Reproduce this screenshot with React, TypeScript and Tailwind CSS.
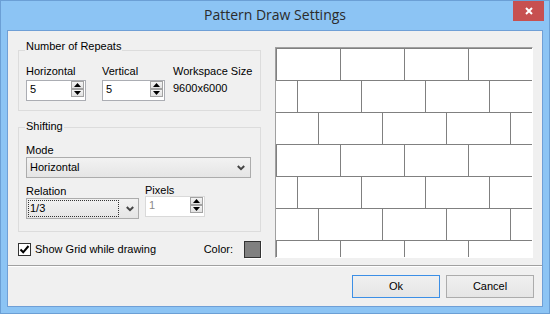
import React from "react";

function Arrow({ up }: { up?: boolean }) {
  return (
    <div className="w-[13px] h-[8px] border border-[#a3a3a3] bg-gradient-to-b from-[#f4f4f4] to-[#e2e2e2] flex items-center justify-center">
      <svg width="7" height="4" viewBox="0 0 7 4" className="block">
        {up ? <polygon points="0,4 7,4 3.5,0" fill="#000" /> : <polygon points="0,0 7,0 3.5,4" fill="#000" />}
      </svg>
    </div>
  );
}

function Spin({ value, className, disabled = false }: { value: string; className: string; disabled?: boolean }) {
  return (
    <div
      className={`flex h-[21px] bg-white border ${className} ${
        disabled ? "border-[#d9d9d9] text-[#8a8a8a]" : "border-[#abadb3] text-black"
      }`}
    >
      <span className="flex-1 pl-[3px] pt-[2px] leading-[13px]">{value}</span>
      <div className="flex flex-col mr-[1px]">
        <Arrow up />
        <Arrow />
      </div>
    </div>
  );
}

function Chevron() {
  return (
    <svg width="8" height="6" viewBox="0 0 8 6" className="block">
      <polyline points="0.8,1 4,4.2 7.2,1" fill="none" stroke="#444" strokeWidth="2" />
    </svg>
  );
}

function Bricks() {
  const lines: React.ReactNode[] = [];
  for (let i = 0; i < 7; i++) {
    const y = i * 32;
    lines.push(<line key={`h${i}`} x1={0} x2={256} y1={y + 0.5} y2={y + 0.5} />);
    const o = Math.floor(((i % 3) * 64) / 3);
    for (let x = o; x < 256; x += 64) {
      lines.push(<line key={`v${i}-${x}`} x1={x + 0.5} x2={x + 0.5} y1={y} y2={Math.min(y + 32, 209)} />);
    }
  }
  return (
    <svg width="256" height="209" className="block bg-white" stroke="#808080" strokeWidth={1} shapeRendering="crispEdges">
      {lines}
    </svg>
  );
}

export default function App() {
  return (
    <div className="w-[550px] h-[314px] bg-[#8cc4f4] border border-[#6b9fd5] flex flex-col font-['Liberation_Sans',Arial,sans-serif] text-[11px] text-black">
      {/* title bar */}
      <div className="h-[29px] relative flex items-center justify-center">
        <span className="font-['Open_Sans',sans-serif] text-[14px] text-[#2b2b2b] leading-none pb-[1px]">
          Pattern Draw Settings
        </span>
        <div className="absolute top-0 right-[5px] w-[31px] h-[20px] bg-[#c75050] flex items-center justify-center">
          <svg width="8" height="8" viewBox="0 0 8 8" className="block">
            <path d="M1 1 L7 7 M7 1 L1 7" stroke="#fff" strokeWidth="2" />
          </svg>
        </div>
      </div>

      {/* client area */}
      <div className="flex-1 mx-[6px] mb-[6px] border border-[#6f9fd6] bg-[#f0f0f0] flex flex-col">
        <div className="h-[234px] flex pl-[10px] pr-[9px]">
          <div className="w-[243px] flex flex-col pt-[19px]">
            {/* Number of Repeats */}
            <div className="relative h-[61px] border border-[#dcdcdc] pl-[7px] pt-[14px]">
              <span className="absolute -top-[11px] left-[6px] px-[1px] bg-[#f0f0f0] leading-[13px]">
                Number of Repeats
              </span>
              <div className="flex">
                <div className="w-[76px] flex flex-col">
                  <span className="leading-[13px]">Horizontal</span>
                  <Spin value="5" className="w-[60px] mt-[2px]" />
                </div>
                <div className="w-[71px] flex flex-col">
                  <span className="leading-[13px]">Vertical</span>
                  <Spin value="5" className="w-[63px] mt-[2px]" />
                </div>
                <div className="flex flex-col">
                  <span className="leading-[13px]">Workspace Size</span>
                  <span className="mt-[2px] h-[21px] leading-[13px] pt-[2px]">9600x6000</span>
                </div>
              </div>
            </div>

            {/* Shifting */}
            <div className="relative mt-[16px] h-[105px] border border-[#dcdcdc] pl-[7px] pt-[16px]">
              <span className="absolute -top-[8px] left-[6px] px-[1px] bg-[#f0f0f0] leading-[13px]">Shifting</span>
              <div className="leading-[13px]">Mode</div>
              <div className="w-[225px] h-[21px] border border-[#acacac] bg-gradient-to-b from-[#f2f2f2] to-[#e5e5e5] flex items-center pl-[3px] pr-[5px]">
                <span className="flex-1 leading-[13px]">Horizontal</span>
                <Chevron />
              </div>
              <div className="flex mt-[7px]">
                <div className="w-[119px] flex flex-col">
                  <span className="leading-[13px]">Relation</span>
                  <div className="w-[113px] h-[21px] border border-[#acacac] bg-gradient-to-b from-[#f2f2f2] to-[#e5e5e5] flex items-center pl-[1px] pr-[4px]">
                    <span className="w-[91px] h-[17px] border border-dotted border-[#333] leading-[13px] pl-[1px] pt-[1px]">
                      1/3
                    </span>
                    <span className="flex-1" />
                    <Chevron />
                  </div>
                </div>
                <div className="flex flex-col -mt-[1px]">
                  <span className="leading-[13px]">Pixels</span>
                  <Spin value="1" className="w-[60px] -mt-[1px]" disabled />
                </div>
              </div>
            </div>

            {/* show grid row */}
            <div className="mt-[9px] h-[17px] flex items-center justify-between">
              <div className="flex items-center">
                <div className="w-[13px] h-[13px] border border-[#333] bg-white flex items-center justify-center">
                  <svg width="11" height="11" viewBox="0 0 11 11" className="block">
                    <path d="M1.5 5.5 L4.2 8.3 L9.5 2" fill="none" stroke="#000" strokeWidth="2" />
                  </svg>
                </div>
                <span className="ml-[4px] leading-[13px]">Show Grid while drawing</span>
              </div>
              <div className="flex items-center">
                <span className="leading-[13px]">Color:</span>
                <div className="ml-[11px] w-[17px] h-[17px] border border-[#333] bg-[#808080] shadow-[1px_1px_0_#fff]" />
              </div>
            </div>
          </div>

          {/* preview */}
          <div className="ml-[14px] mt-[16px] w-[258px] h-[211px] border border-t-[#a0a0a0] border-l-[#a0a0a0] border-r-white border-b-white">
            <Bricks />
          </div>
        </div>

        <div className="h-[2px] border-t border-[#a0a0a0] bg-white" />

        <div className="flex-1 flex justify-end items-start pt-[8px] pr-[8px] gap-[6px]">
          <button className="w-[88px] h-[23px] border border-[#3c8fe6] bg-gradient-to-b from-[#f0f0f0] to-[#e5e5e5] leading-[13px]">
            Ok
          </button>
          <button className="w-[88px] h-[23px] border border-[#acacac] bg-gradient-to-b from-[#f0f0f0] to-[#e5e5e5] leading-[13px]">
            Cancel
          </button>
        </div>
      </div>
    </div>
  );
}
